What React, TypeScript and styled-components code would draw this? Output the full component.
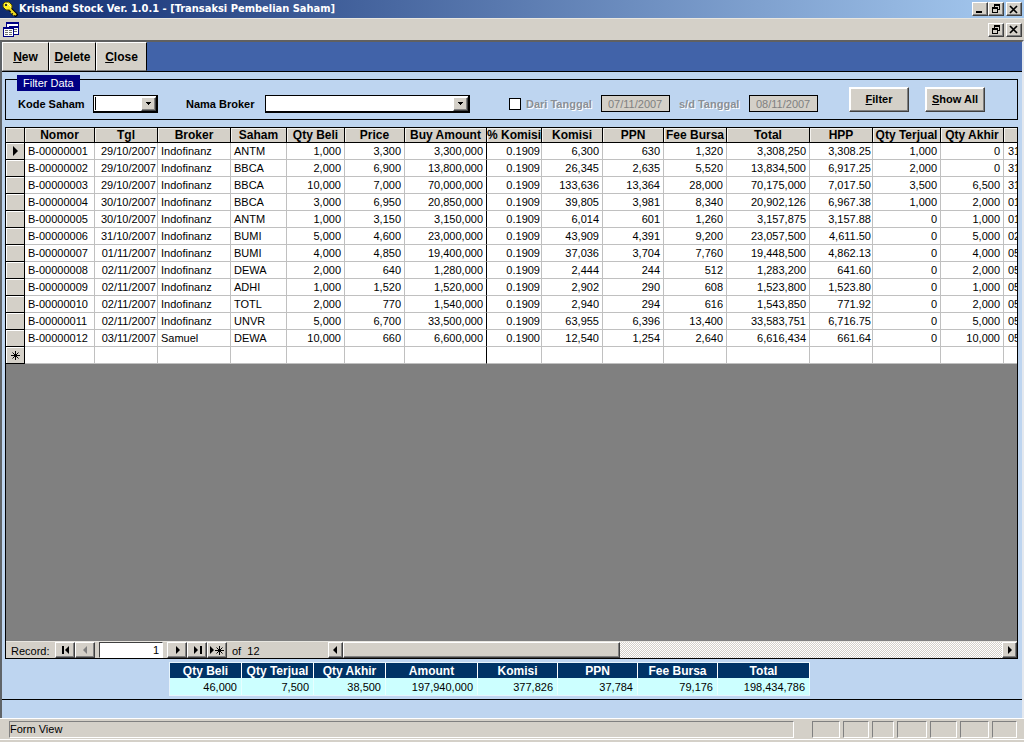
import React from "react";
import styled, { createGlobalStyle, css } from "styled-components";

const FACE = "#d4d0c8";
const SKY = "#bed5f0";

const GlobalStyle = createGlobalStyle`
  * { box-sizing: border-box; }
  body {
    margin: 0;
    background: ${FACE};
    color: #000;
    font: 11px/14px "Liberation Sans", Arial, sans-serif;
  }
  button, input, select { font: inherit; color: inherit; margin: 0; border-radius: 0; }
  svg { display: block; }
`;

const raised = css`
  border: 1px solid;
  border-color: #fff #404040 #404040 #fff;
  box-shadow: inset -1px -1px 0 #808080;
`;

const Window = styled.div`
  min-height: 100vh;
  display: flex;
  flex-direction: column;
  overflow: hidden;
`;

const TitleBar = styled.header`
  height: 18px;
  flex: none;
  display: flex;
  align-items: center;
  gap: 1px;
  padding: 0 2px;
  background: linear-gradient(90deg, #0f2b70, #a6caf0);
`;

const Title = styled.h1`
  flex: 1;
  margin: 0;
  color: #fff;
  font: bold 11px/16px "DejaVu Sans Condensed", Tahoma, sans-serif;
  white-space: nowrap;
`;

const MenuBar = styled.div`
  height: 22px;
  flex: none;
  display: flex;
  align-items: center;
  justify-content: space-between;
  padding: 0 2px;
  background: ${FACE};
  border-top: 1px solid #e8e6e0;
`;

const CaptionButtons = styled.div`
  display: flex;
`;

const CaptionButton = styled.button<{ $apart?: boolean }>`
  ${raised}
  width: 16px;
  height: 14px;
  padding: 0;
  margin-left: ${(p) => (p.$apart ? "2px" : "0")};
  background: ${FACE};
  display: grid;
  place-items: center;
`;

const Workspace = styled.main`
  flex: 1;
  display: flex;
  flex-direction: column;
  background: ${SKY};
  border-top: 2px solid #606060;
  border-left: 2px solid #606468;
  border-right: 2px solid #e4e8ee;
`;

const Toolbar = styled.nav`
  height: 30px;
  flex: none;
  display: flex;
  background: #4163a9;
  border-bottom: 1px solid #000;
`;

const ToolButton = styled.button<{ $width: number }>`
  width: ${(p) => p.$width}px;
  padding: 0;
  background: ${FACE};
  border: 1px solid;
  border-color: #fff #000 #808080 #fff;
  font-size: 12px;
  font-weight: bold;
`;

const FilterBox = styled.fieldset`
  position: relative;
  flex: none;
  height: 41px;
  min-width: 0;
  margin: 7px 4px 7px 3px;
  padding: 0 0 0 12px;
  border: 1px solid #000;
  display: grid;
  grid-template-columns: 168px 323px 170px 170px 76px auto;
  grid-template-rows: 39px;
  justify-content: start;
  align-items: center;
`;

const Legend = styled.legend`
  position: absolute;
  left: 11px;
  top: -5px;
  padding: 1px 6px;
  background: #000084;
  color: #fff;
`;

const Field = styled.div`
  display: flex;
  align-items: center;
  padding-top: 8px;
`;

const FieldLabel = styled.label<{ $width: number; $dim?: boolean }>`
  width: ${(p) => p.$width}px;
  font-weight: bold;
  white-space: nowrap;
  ${(p) =>
    p.$dim &&
    css`
      color: #8a8f96;
      text-shadow: 1px 1px 0 #fff;
    `}
`;

const ComboFrame = styled.span<{ $width: number; $caret?: boolean }>`
  position: relative;
  display: flex;
  width: ${(p) => p.$width}px;
  height: 18px;
  background: #fff;
  border: 1px solid #000;
  border-right-width: 2px;
  border-bottom-width: 2px;
  ${(p) =>
    p.$caret &&
    css`
      &::before {
        content: "";
        position: absolute;
        left: 1px;
        top: 1px;
        bottom: 1px;
        width: 1px;
        background: #000;
      }
    `}
`;

const ComboSelect = styled.select`
  appearance: none;
  width: 100%;
  border: 0;
  padding: 0 18px 0 4px;
  background: transparent;
  outline: none;
`;

const ComboArrow = styled.span`
  ${raised}
  position: absolute;
  right: 0;
  top: 1px;
  bottom: 0;
  width: 15px;
  background: ${FACE};
  display: grid;
  place-items: center;
  pointer-events: none;
`;

const Tick = styled.input`
  appearance: none;
  width: 12px;
  height: 12px;
  margin-right: 5px;
  background: #fff;
  border: 1px solid #000;
  &:checked { background: #000; }
`;

const DateInput = styled.input`
  width: 69px;
  height: 17px;
  padding: 0 0 0 6px;
  background: ${FACE};
  border: 1px solid #000;
  color: #808080;
`;

const PushButton = styled.button`
  width: 60px;
  height: 25px;
  padding: 0 0 2px;
  background: ${FACE};
  border: 1px solid;
  border-color: #fff #404040 #404040 #fff;
  box-shadow: inset -1px -1px 0 #808080, inset 1px 1px 0 #fff;
  font-weight: bold;
  white-space: nowrap;
`;

const GridPanel = styled.section`
  flex: 1;
  display: flex;
  flex-direction: column;
  margin: 0 4px 3px 3px;
  border: 1px solid #000;
  background: #808080;
`;

const GridScroll = styled.div`
  flex: 1;
  overflow: hidden;
`;

const Grid = styled.table`
  width: 100%;
  table-layout: fixed;
  border-collapse: separate;
  border-spacing: 0;
`;

const HeadCell = styled.th`
  height: 15px;
  padding: 0;
  background: ${FACE};
  border-right: 1px solid #000;
  border-bottom: 1px solid #000;
  box-shadow: inset 1px 1px 0 #f4f2ee;
  font-size: 12px;
  line-height: 14px;
  white-space: nowrap;
  overflow: hidden;
  &:last-child { border-right: 0; }
`;

const SelectorCell = styled.th`
  height: 17px;
  padding: 0;
  background: ${FACE};
  border-right: 1px solid #000;
  border-bottom: 1px solid #000;
  box-shadow: inset 1px 1px 0 #fff;
  svg { margin: 0 auto; }
`;

const Cell = styled.td<{ $align: "left" | "right"; $pad: number; $frozen?: boolean }>`
  height: 17px;
  padding: 0 ${(p) => p.$pad}px;
  background: #fff;
  text-align: ${(p) => p.$align};
  border-right: 1px solid ${(p) => (p.$frozen ? "#000" : "#c0c0c0")};
  border-bottom: 1px solid #c0c0c0;
  white-space: nowrap;
  overflow: hidden;
  &:last-child { border-right: 0; }
`;

const RecordBar = styled.div`
  height: 17px;
  flex: none;
  display: flex;
  background: ${FACE};
  border-top: 1px solid #e8e6e0;
  line-height: 18px;
`;

const RecordLabel = styled.label`
  width: 49px;
  padding-left: 5px;
`;

const RecordButton = styled.button<{ $width?: number }>`
  ${raised}
  width: ${(p) => p.$width ?? 20}px;
  flex: none;
  padding: 0;
  background: ${FACE};
  display: grid;
  place-items: center;
`;

const RecordInput = styled.input`
  width: 64px;
  margin: 0 4px;
  padding: 0 3px;
  background: #fff;
  border: 1px solid;
  border-color: #404040 #fff #fff #404040;
  text-align: right;
`;

const RecordTotal = styled.span`
  width: 101px;
  padding-left: 5px;
  white-space: pre;
`;

const Track = styled.div`
  flex: 1;
  background: repeating-conic-gradient(#fff 0 25%, ${FACE} 0 50%) 0 0 / 2px 2px;
`;

const Thumb = styled.div`
  ${raised}
  width: 42%;
  height: 16px;
  background: ${FACE};
`;

const SummaryArea = styled.section`
  flex: none;
  padding: 0 0 3px 167px;
  border-bottom: 1px solid #000;
`;

const Summary = styled.table`
  table-layout: fixed;
  width: 641px;
  border-collapse: separate;
  border-spacing: 0;
  border: 1px solid #e6f4fc;
  border-right: 0;
`;

const SummaryHead = styled.th<{ $width: number }>`
  width: ${(p) => p.$width}px;
  height: 15px;
  padding: 0;
  background: #003366;
  color: #fff;
  border-right: 1px solid #fff;
  font-size: 12px;
  line-height: 14px;
  white-space: nowrap;
`;

const SummaryCell = styled.td`
  height: 17px;
  padding: 1px 4px 0;
  background: #ccffff;
  border-right: 1px solid #e6ffff;
  text-align: right;
`;

const FormFooter = styled.div`
  height: 18px;
  flex: none;
`;

const StatusBar = styled.footer`
  height: 24px;
  flex: none;
  display: flex;
  align-items: flex-start;
  gap: 3px;
  padding: 2px 7px 0 9px;
  border-top: 1px solid #fff;
  box-shadow: inset 0 -2px 0 ${FACE}, inset 0 -3px 0 #fff;
`;

const StatusText = styled.div`
  flex: 1;
  height: 17px;
  margin-right: 15px;
  border: 1px solid;
  border-color: #808080 #fff #fff #808080;
  line-height: 15px;
`;

const StatusCell = styled.div<{ $width: number }>`
  width: ${(p) => p.$width}px;
  height: 17px;
  border: 1px solid;
  border-color: #808080 #fff #fff #808080;
`;

const KeyIcon = () => (
  <svg width="16" height="16" viewBox="0 0 16 16">
    <path d="M7 7l8 8M10 12l4 1" stroke="#000" strokeWidth="4" />
    <path d="M1 3l2-2h4l3 3v3L8 9H4L1 6z" fill="#ffee22" stroke="#4a4300" />
    <path d="M8 8l6 6M11 10l-2 2M13 12l-2 2" stroke="#ecd820" strokeWidth="2" />
    <path d="M3 3h2v2H3z" fill="#333" />
    <path d="M5 2l4 4" stroke="#fffbb0" />
  </svg>
);

const FormIcon = () => (
  <svg width="18" height="16" viewBox="0 0 18 16" shapeRendering="crispEdges">
    <path d="M4 0h13v6H4z" fill="#000084" />
    <path d="M5 2h11v4H5z" fill="#fff" />
    <path d="M7 4h10v9H7z" fill="#000084" />
    <path d="M8 6h8v6H8z" fill="#fff" />
    <path d="M12 7h3v1h-3zM12 9h3v1h-3z" fill="#707070" />
    <path d="M1 5h11v10H1z" fill="#000084" />
    <path d="M2 7h9v7H2z" fill="#fff" />
    <path d="M3 8h3v1H3zM7 8h3v1H7zM3 10h3v1H3zM7 10h3v1H7zM3 12h3v1H3zM7 12h3v1H7z" fill="#707070" />
  </svg>
);

const MinimizeIcon = () => (
  <svg width="10" height="9" shapeRendering="crispEdges">
    <path d="M1 6h6v2H1z" />
  </svg>
);

const RestoreIcon = () => (
  <svg width="10" height="10" shapeRendering="crispEdges">
    <path d="M3 0h6v6H7V5h1V2H4v1H3zM1 3h6v6H1zM2 5v3h4V5z" fillRule="evenodd" />
  </svg>
);

const CloseIcon = () => (
  <svg width="10" height="9">
    <path d="M1 1l7 7M8 1L1 8" stroke="#000" strokeWidth="1.7" />
  </svg>
);

const DownIcon = () => (
  <svg width="7" height="4" shapeRendering="crispEdges">
    <path d="M1 0h5v1H1zM2 1h3v1H2zM3 2h1v1H3z" />
  </svg>
);

const NAV_SHAPES = {
  first: "M2 0h2v8H2zM9 0v8L5 4z",
  previous: "M7 0v8L3 4z",
  next: "M4 0v8l4-4z",
  last: "M2 0v8l4-4zM8 0h2v8H8z",
  current: "M3 0v10l5-5z",
};

const NavIcon = ({ kind, dim }: { kind: keyof typeof NAV_SHAPES; dim?: boolean }) => (
  <svg width="11" height={kind === "current" ? 10 : 8}>
    <path d={NAV_SHAPES[kind]} fill={dim ? "#808080" : "#000"} />
  </svg>
);

const NewRecordIcon = () => (
  <svg width="16" height="9">
    <path d="M1 0v8l4-4z" />
    <path d="M10.500 0v9M6 4.500h9M7.500 1.500l6 6M13.500 1.500l-6 6" stroke="#000" />
  </svg>
);

const StarIcon = () => (
  <svg width="11" height="11">
    <path d="M5.500 1v9M1 5.500h9M2.500 2.500l6 6M8.500 2.500l-6 6" stroke="#000" />
  </svg>
);

type Column = { title: string; width?: number; align: "left" | "right"; pad: number; frozen?: boolean };

const columns: Column[] = [
  { title: "Nomor", width: 70, align: "left", pad: 3 },
  { title: "Tgl", width: 63, align: "right", pad: 1 },
  { title: "Broker", width: 73, align: "left", pad: 3 },
  { title: "Saham", width: 56, align: "left", pad: 3 },
  { title: "Qty Beli", width: 58, align: "right", pad: 3 },
  { title: "Price", width: 60, align: "right", pad: 3 },
  { title: "Buy Amount", width: 82, align: "right", pad: 3, frozen: true },
  { title: "% Komisi", width: 55, align: "right", pad: 1 },
  { title: "Komisi", width: 61, align: "right", pad: 3 },
  { title: "PPN", width: 61, align: "right", pad: 3 },
  { title: "Fee Bursa", width: 63, align: "right", pad: 3 },
  { title: "Total", width: 83, align: "right", pad: 3 },
  { title: "HPP", width: 63, align: "right", pad: 1 },
  { title: "Qty Terjual", width: 68, align: "right", pad: 3 },
  { title: "Qty Akhir", width: 63, align: "right", pad: 3 },
  { title: "", align: "left", pad: 4 },
];

const rows = [
  ["B-00000001", "29/10/2007", "Indofinanz", "ANTM", "1,000", "3,300", "3,300,000", "0.1909", "6,300", "630", "1,320", "3,308,250", "3,308.25", "1,000", "0", "31"],
  ["B-00000002", "29/10/2007", "Indofinanz", "BBCA", "2,000", "6,900", "13,800,000", "0.1909", "26,345", "2,635", "5,520", "13,834,500", "6,917.25", "2,000", "0", "31"],
  ["B-00000003", "29/10/2007", "Indofinanz", "BBCA", "10,000", "7,000", "70,000,000", "0.1909", "133,636", "13,364", "28,000", "70,175,000", "7,017.50", "3,500", "6,500", "31"],
  ["B-00000004", "30/10/2007", "Indofinanz", "BBCA", "3,000", "6,950", "20,850,000", "0.1909", "39,805", "3,981", "8,340", "20,902,126", "6,967.38", "1,000", "2,000", "01"],
  ["B-00000005", "30/10/2007", "Indofinanz", "ANTM", "1,000", "3,150", "3,150,000", "0.1909", "6,014", "601", "1,260", "3,157,875", "3,157.88", "0", "1,000", "01"],
  ["B-00000006", "31/10/2007", "Indofinanz", "BUMI", "5,000", "4,600", "23,000,000", "0.1909", "43,909", "4,391", "9,200", "23,057,500", "4,611.50", "0", "5,000", "02"],
  ["B-00000007", "01/11/2007", "Indofinanz", "BUMI", "4,000", "4,850", "19,400,000", "0.1909", "37,036", "3,704", "7,760", "19,448,500", "4,862.13", "0", "4,000", "05"],
  ["B-00000008", "02/11/2007", "Indofinanz", "DEWA", "2,000", "640", "1,280,000", "0.1909", "2,444", "244", "512", "1,283,200", "641.60", "0", "2,000", "05"],
  ["B-00000009", "02/11/2007", "Indofinanz", "ADHI", "1,000", "1,520", "1,520,000", "0.1909", "2,902", "290", "608", "1,523,800", "1,523.80", "0", "1,000", "05"],
  ["B-00000010", "02/11/2007", "Indofinanz", "TOTL", "2,000", "770", "1,540,000", "0.1909", "2,940", "294", "616", "1,543,850", "771.92", "0", "2,000", "05"],
  ["B-00000011", "02/11/2007", "Indofinanz", "UNVR", "5,000", "6,700", "33,500,000", "0.1909", "63,955", "6,396", "13,400", "33,583,751", "6,716.75", "0", "5,000", "05"],
  ["B-00000012", "03/11/2007", "Samuel", "DEWA", "10,000", "660", "6,600,000", "0.1900", "12,540", "1,254", "2,640", "6,616,434", "661.64", "0", "10,000", "05"],
];

const totals = [
  { title: "Qty Beli", value: "46,000", width: 72 },
  { title: "Qty Terjual", value: "7,500", width: 72 },
  { title: "Qty Akhir", value: "38,500", width: 72 },
  { title: "Amount", value: "197,940,000", width: 92 },
  { title: "Komisi", value: "377,826", width: 80 },
  { title: "PPN", value: "37,784", width: 80 },
  { title: "Fee Bursa", value: "79,176", width: 80 },
  { title: "Total", value: "198,434,786", width: 92 },
];

const Combo = ({ id, width, caret }: { id: string; width: number; caret?: boolean }) => (
  <ComboFrame $width={width} $caret={caret}>
    <ComboSelect id={id} defaultValue="">
      <option value=""></option>
    </ComboSelect>
    <ComboArrow>
      <DownIcon />
    </ComboArrow>
  </ComboFrame>
);

export default function App() {
  return (
    <Window>
      <GlobalStyle />
      <TitleBar>
        <KeyIcon />
        <Title>Krishand Stock Ver. 1.0.1 - [Transaksi Pembelian Saham]</Title>
        <CaptionButtons>
          <CaptionButton aria-label="Minimize"><MinimizeIcon /></CaptionButton>
          <CaptionButton aria-label="Restore"><RestoreIcon /></CaptionButton>
          <CaptionButton aria-label="Close" $apart><CloseIcon /></CaptionButton>
        </CaptionButtons>
      </TitleBar>
      <MenuBar>
        <FormIcon />
        <CaptionButtons>
          <CaptionButton aria-label="Restore form"><RestoreIcon /></CaptionButton>
          <CaptionButton aria-label="Close form" $apart><CloseIcon /></CaptionButton>
        </CaptionButtons>
      </MenuBar>

      <Workspace>
        <Toolbar>
          <ToolButton $width={47}><u>N</u>ew</ToolButton>
          <ToolButton $width={47}><u>D</u>elete</ToolButton>
          <ToolButton $width={51}><u>C</u>lose</ToolButton>
        </Toolbar>

        <FilterBox>
          <Legend>Filter Data</Legend>
          <Field>
            <FieldLabel htmlFor="kode" $width={75}>Kode Saham</FieldLabel>
            <Combo id="kode" width={65} caret />
          </Field>
          <Field>
            <FieldLabel htmlFor="broker" $width={79}>Nama Broker</FieldLabel>
            <Combo id="broker" width={205} />
          </Field>
          <Field>
            <Tick type="checkbox" id="dari" />
            <FieldLabel htmlFor="dari" $width={75} $dim>Dari Tanggal</FieldLabel>
            <DateInput aria-label="Dari Tanggal" defaultValue="07/11/2007" disabled />
          </Field>
          <Field>
            <FieldLabel htmlFor="sampai" $width={70} $dim>s/d Tanggal</FieldLabel>
            <DateInput id="sampai" defaultValue="08/11/2007" disabled />
          </Field>
          <PushButton><u>F</u>ilter</PushButton>
          <PushButton><u>S</u>how All</PushButton>
        </FilterBox>

        <GridPanel>
          <GridScroll>
            <Grid>
              <colgroup>
                <col width={19} />
                {columns.map((c, i) => <col key={i} width={c.width} />)}
              </colgroup>
              <thead>
                <tr>
                  <HeadCell />
                  {columns.map((c, i) => <HeadCell key={i}>{c.title}</HeadCell>)}
                </tr>
              </thead>
              <tbody>
                {rows.map((row, r) => (
                  <tr key={row[0]}>
                    <SelectorCell>{r === 0 && <NavIcon kind="current" />}</SelectorCell>
                    {columns.map((c, i) => (
                      <Cell key={i} $align={c.align} $pad={c.pad} $frozen={c.frozen}>{row[i]}</Cell>
                    ))}
                  </tr>
                ))}
                <tr>
                  <SelectorCell><StarIcon /></SelectorCell>
                  {columns.map((c, i) => (
                    <Cell key={i} $align={c.align} $pad={c.pad} $frozen={c.frozen} />
                  ))}
                </tr>
              </tbody>
            </Grid>
          </GridScroll>
          <RecordBar>
            <RecordLabel htmlFor="record">Record:</RecordLabel>
            <RecordButton aria-label="First record"><NavIcon kind="first" /></RecordButton>
            <RecordButton aria-label="Previous record"><NavIcon kind="previous" dim /></RecordButton>
            <RecordInput id="record" defaultValue="1" />
            <RecordButton aria-label="Next record"><NavIcon kind="next" /></RecordButton>
            <RecordButton aria-label="Last record"><NavIcon kind="last" /></RecordButton>
            <RecordButton aria-label="New record"><NewRecordIcon /></RecordButton>
            <RecordTotal>{"of  12"}</RecordTotal>
            <RecordButton aria-label="Scroll left" $width={15}><NavIcon kind="previous" /></RecordButton>
            <Track><Thumb /></Track>
            <RecordButton aria-label="Scroll right" $width={15}><NavIcon kind="next" /></RecordButton>
          </RecordBar>
        </GridPanel>

        <SummaryArea>
          <Summary>
            <thead>
              <tr>
                {totals.map((t) => <SummaryHead key={t.title} $width={t.width}>{t.title}</SummaryHead>)}
              </tr>
            </thead>
            <tbody>
              <tr>
                {totals.map((t) => <SummaryCell key={t.title}>{t.value}</SummaryCell>)}
              </tr>
            </tbody>
          </Summary>
        </SummaryArea>
        <FormFooter />
      </Workspace>

      <StatusBar>
        <StatusText>Form View</StatusText>
        {[28, 26, 22, 30, 27, 29, 25].map((width, i) => <StatusCell key={i} $width={width} />)}
      </StatusBar>
    </Window>
  );
}
